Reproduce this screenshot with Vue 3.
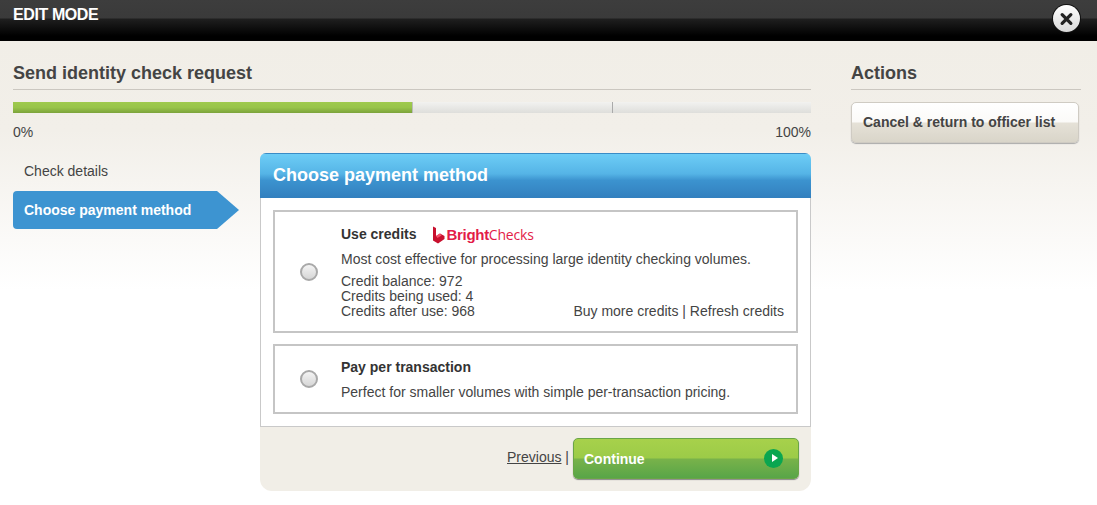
<template>
  <div class="page">
    <header class="topbar">
      <span class="topbar-title">EDIT MODE</span>
      <button class="close-btn" aria-label="Close">
        <svg width="28" height="28" viewBox="0 0 28 28">
          <path d="M9.5 9.5 L18.5 18.5 M18.5 9.5 L9.5 18.5" stroke="#222" stroke-width="3.4" stroke-linecap="round" />
        </svg>
      </button>
    </header>

    <div class="content">
      <main class="main-col">
        <h2 class="section-title">Send identity check request</h2>

        <div class="progress">
          <div class="progress-fill"></div>
          <div class="progress-seg"></div>
          <div class="progress-seg"></div>
        </div>
        <div class="progress-labels">
          <span>0%</span>
          <span>100%</span>
        </div>

        <div class="wizard">
          <nav class="steps">
            <div class="step">Check details</div>
            <div class="step step-active">Choose payment method</div>
          </nav>

          <section class="panel">
            <div class="panel-head">Choose payment method</div>
            <div class="panel-body">
              <div class="option option-credits">
                <span class="radio"></span>
                <div class="option-text">
                  <div class="option-title">
                    <strong>Use credits</strong>
                    <span class="logo">
                      <svg width="13" height="18" viewBox="0 0 13 18">
                        <path d="M1 0.5 L4 2 V10 L8 7.5 L12.5 10 V13 L6 17.5 L1 14.5 Z" fill="#c8102e" />
                        <path d="M4 10 L8 7.5 L9.5 9.5 L5.5 12 Z" fill="#f4506a" />
                      </svg>
                      <span class="logo-bold">Bright</span><span class="logo-thin">Checks</span>
                    </span>
                  </div>
                  <p class="option-desc">Most cost effective for processing large identity checking volumes.</p>
                  <div class="credits-row">
                    <div class="credits">
                      <div>Credit balance: {{ balance }}</div>
                      <div>Credits being used: {{ used }}</div>
                      <div>Credits after use: {{ balance - used }}</div>
                    </div>
                    <div class="credit-links">Buy more credits | Refresh credits</div>
                  </div>
                </div>
              </div>

              <div class="option option-pay">
                <span class="radio"></span>
                <div class="option-text">
                  <div class="option-title"><strong>Pay per transaction</strong></div>
                  <p class="option-desc">Perfect for smaller volumes with simple per-transaction pricing.</p>
                </div>
              </div>
            </div>
            <div class="panel-foot">
              <span class="prev"><a href="#">Previous</a> |</span>
              <button class="continue-btn">
                <span>Continue</span>
                <span class="continue-icon"></span>
              </button>
            </div>
          </section>
        </div>
      </main>

      <aside class="side-col">
        <h2 class="section-title">Actions</h2>
        <button class="cancel-btn">Cancel &amp; return to officer list</button>
      </aside>
    </div>
  </div>
</template>

<script setup>
const balance = 972
const used = 4
</script>

<style>
html,
body {
  margin: 0;
  background: #fff;
}
</style>

<style scoped>
.page {
  position: relative;
  width: 1097px;
  height: 505px;
  overflow: hidden;
  font-family: "Liberation Sans", Arial, sans-serif;
  font-size: 14px;
  color: #444;
  background: linear-gradient(to bottom, #f1eee7 41px, #f2efe9 130px, #fff 290px);
}

.topbar {
  height: 41px;
  background: linear-gradient(to bottom, #3d3d3d 0, #3a3a3a 18px, #1f1f1f 19px, #000 36px);
  box-sizing: border-box;
  padding: 6px 13px 0;
}

.topbar-title {
  display: block;
  color: #fff;
  font-size: 16px;
  line-height: 18px;
  font-weight: bold;
  letter-spacing: -0.4px;
}

.close-btn {
  position: absolute;
  top: 5px;
  right: 17px;
  width: 27px;
  height: 27px;
  padding: 0;
  box-sizing: content-box;
  border: 0;
  border-radius: 50%;
  box-shadow: 0 0 0 1px #111;
  background: linear-gradient(to bottom, #fff, #d8d8d8);
  display: flex;
  align-items: center;
  justify-content: center;
}

.content {
  display: flex;
  padding: 0 16px 0 13px;
  gap: 40px;
}

.main-col {
  width: 798px;
}

.side-col {
  width: 230px;
}

.section-title {
  margin: 0;
  height: 49px;
  box-sizing: border-box;
  padding-top: 22px;
  font-size: 18px;
  line-height: 20px;
  font-weight: bold;
  color: #444;
  border-bottom: 1px solid #cbc7c0;
}

.progress {
  display: flex;
  margin-top: 12px;
  height: 11px;
}

.progress-fill {
  width: 399px;
  background: linear-gradient(to bottom, #9fca4e 0, #98c44a 50%, #7ca33b 100%);
  border-right: 1px solid #bbb;
}

.progress-seg {
  flex: 1;
  background: linear-gradient(to bottom, #f2f2f0, #dededb);
}

.progress-seg + .progress-seg {
  border-left: 1px solid #aaa;
}

.progress-labels {
  display: flex;
  justify-content: space-between;
  margin-top: 11px;
  line-height: 16px;
}

.wizard {
  display: flex;
  margin-top: 13px;
  gap: 21px;
}

.steps {
  width: 226px;
  padding-top: 0;
}

.step {
  height: 38px;
  padding-left: 11px;
  line-height: 37px;
  color: #444;
}

.step-active {
  margin-top: 0;
  height: 38px;
  color: #fff;
  font-weight: bold;
  line-height: 38px;
  background: #3d94d1;
  border-radius: 4px 0 0 4px;
  clip-path: polygon(0 0, 204px 0, 226px 19px, 204px 38px, 0 38px);
}

.panel {
  width: 551px;
  height: 338px;
  display: flex;
  flex-direction: column;
  border-radius: 6px 6px 12px 12px;
  overflow: hidden;
  background: #f1eee7;
}

.panel-head {
  height: 45px;
  box-sizing: border-box;
  padding-left: 13px;
  line-height: 43px;
  font-size: 18px;
  font-weight: bold;
  color: #fff;
  background: linear-gradient(to bottom, #6dcdf6 0, #55b4e6 45%, #3c93cf 60%, #327fbe 100%);
  border-top: 1px solid #3a8cc6;
}

.panel-body {
  height: 229px;
  box-sizing: border-box;
  padding: 12px 12px 0;
  background: #fff;
  border: 1px solid #c9c9c9;
  border-top: 0;
}

.option {
  display: flex;
  align-items: center;
  box-sizing: border-box;
  border: 2px solid #c5c5c5;
}

.option-credits {
  height: 123px;
}

.option-pay {
  height: 70px;
  margin-top: 11px;
}

.radio {
  flex: none;
  width: 14px;
  height: 14px;
  margin-left: 25px;
  border: 2px solid #a9a9a9;
  border-radius: 50%;
  background: linear-gradient(to bottom, #f4f4f4, #d6d6d6);
}

.option-text {
  flex: 1;
  margin-left: 23px;
  margin-right: 12px;
  line-height: 14px;
  color: #444;
}

.option-title {
  display: flex;
  align-items: center;
  height: 18px;
}

.option-title strong {
  color: #333;
}

.option-desc {
  margin: 8px 0 0;
  line-height: 16px;
}

.logo {
  display: flex;
  align-items: center;
  margin-left: 16px;
  margin-top: 3px;
  font-size: 15px;
  line-height: 18px;
  color: #e31b48;
}

.logo svg {
  margin-right: 1px;
}

.logo-bold {
  font-weight: bold;
  letter-spacing: -0.3px;
}

.logo-thin {
  font-family: "Open Sans", sans-serif;
  font-size: 14px;
  letter-spacing: -0.2px;
}

.credits-row {
  display: flex;
  justify-content: space-between;
  align-items: flex-end;
  margin-top: 7px;
}

.credits-row .credits {
  line-height: 15px;
}

.credit-links {
  line-height: 15px;
}

.panel-foot {
  flex: 1;
  display: flex;
  align-items: flex-start;
  justify-content: flex-end;
  padding: 11px 12px 0 0;
  gap: 4px;
}

.prev {
  margin-top: 11px;
  line-height: 16px;
  color: #444;
}

.prev a {
  color: #444;
}

.continue-btn {
  width: 226px;
  height: 41px;
  padding: 0 15px 0 10px;
  display: flex;
  align-items: center;
  justify-content: space-between;
  border: 1px solid #6aa547;
  border-radius: 5px;
  font-family: inherit;
  font-size: 14px;
  font-weight: bold;
  color: #fff;
  background: linear-gradient(to bottom, #a7d14b 0, #9ccb48 48%, #78b24a 52%, #58a548 100%);
  box-shadow: 0 1px 1px #888;
}

.continue-icon {
  width: 19px;
  height: 19px;
  border-radius: 50%;
  background: #0aa650;
  position: relative;
}

.continue-icon::after {
  content: "";
  position: absolute;
  left: 8px;
  top: 5px;
  border-left: 6px solid #fff;
  border-top: 4.5px solid transparent;
  border-bottom: 4.5px solid transparent;
}

.cancel-btn {
  display: block;
  width: 228px;
  height: 41px;
  margin-top: 12px;
  padding: 0 0 2px 11px;
  text-align: left;
  border: 1px solid #cfcbc3;
  border-radius: 5px;
  font-family: inherit;
  font-size: 14px;
  font-weight: bold;
  color: #444;
  background: linear-gradient(to bottom, #fff 0, #fbfaf8 48%, #e5e1d7 52%, #d9d5c9 100%);
  box-shadow: 0 1px 1px #aaa;
}
</style>
